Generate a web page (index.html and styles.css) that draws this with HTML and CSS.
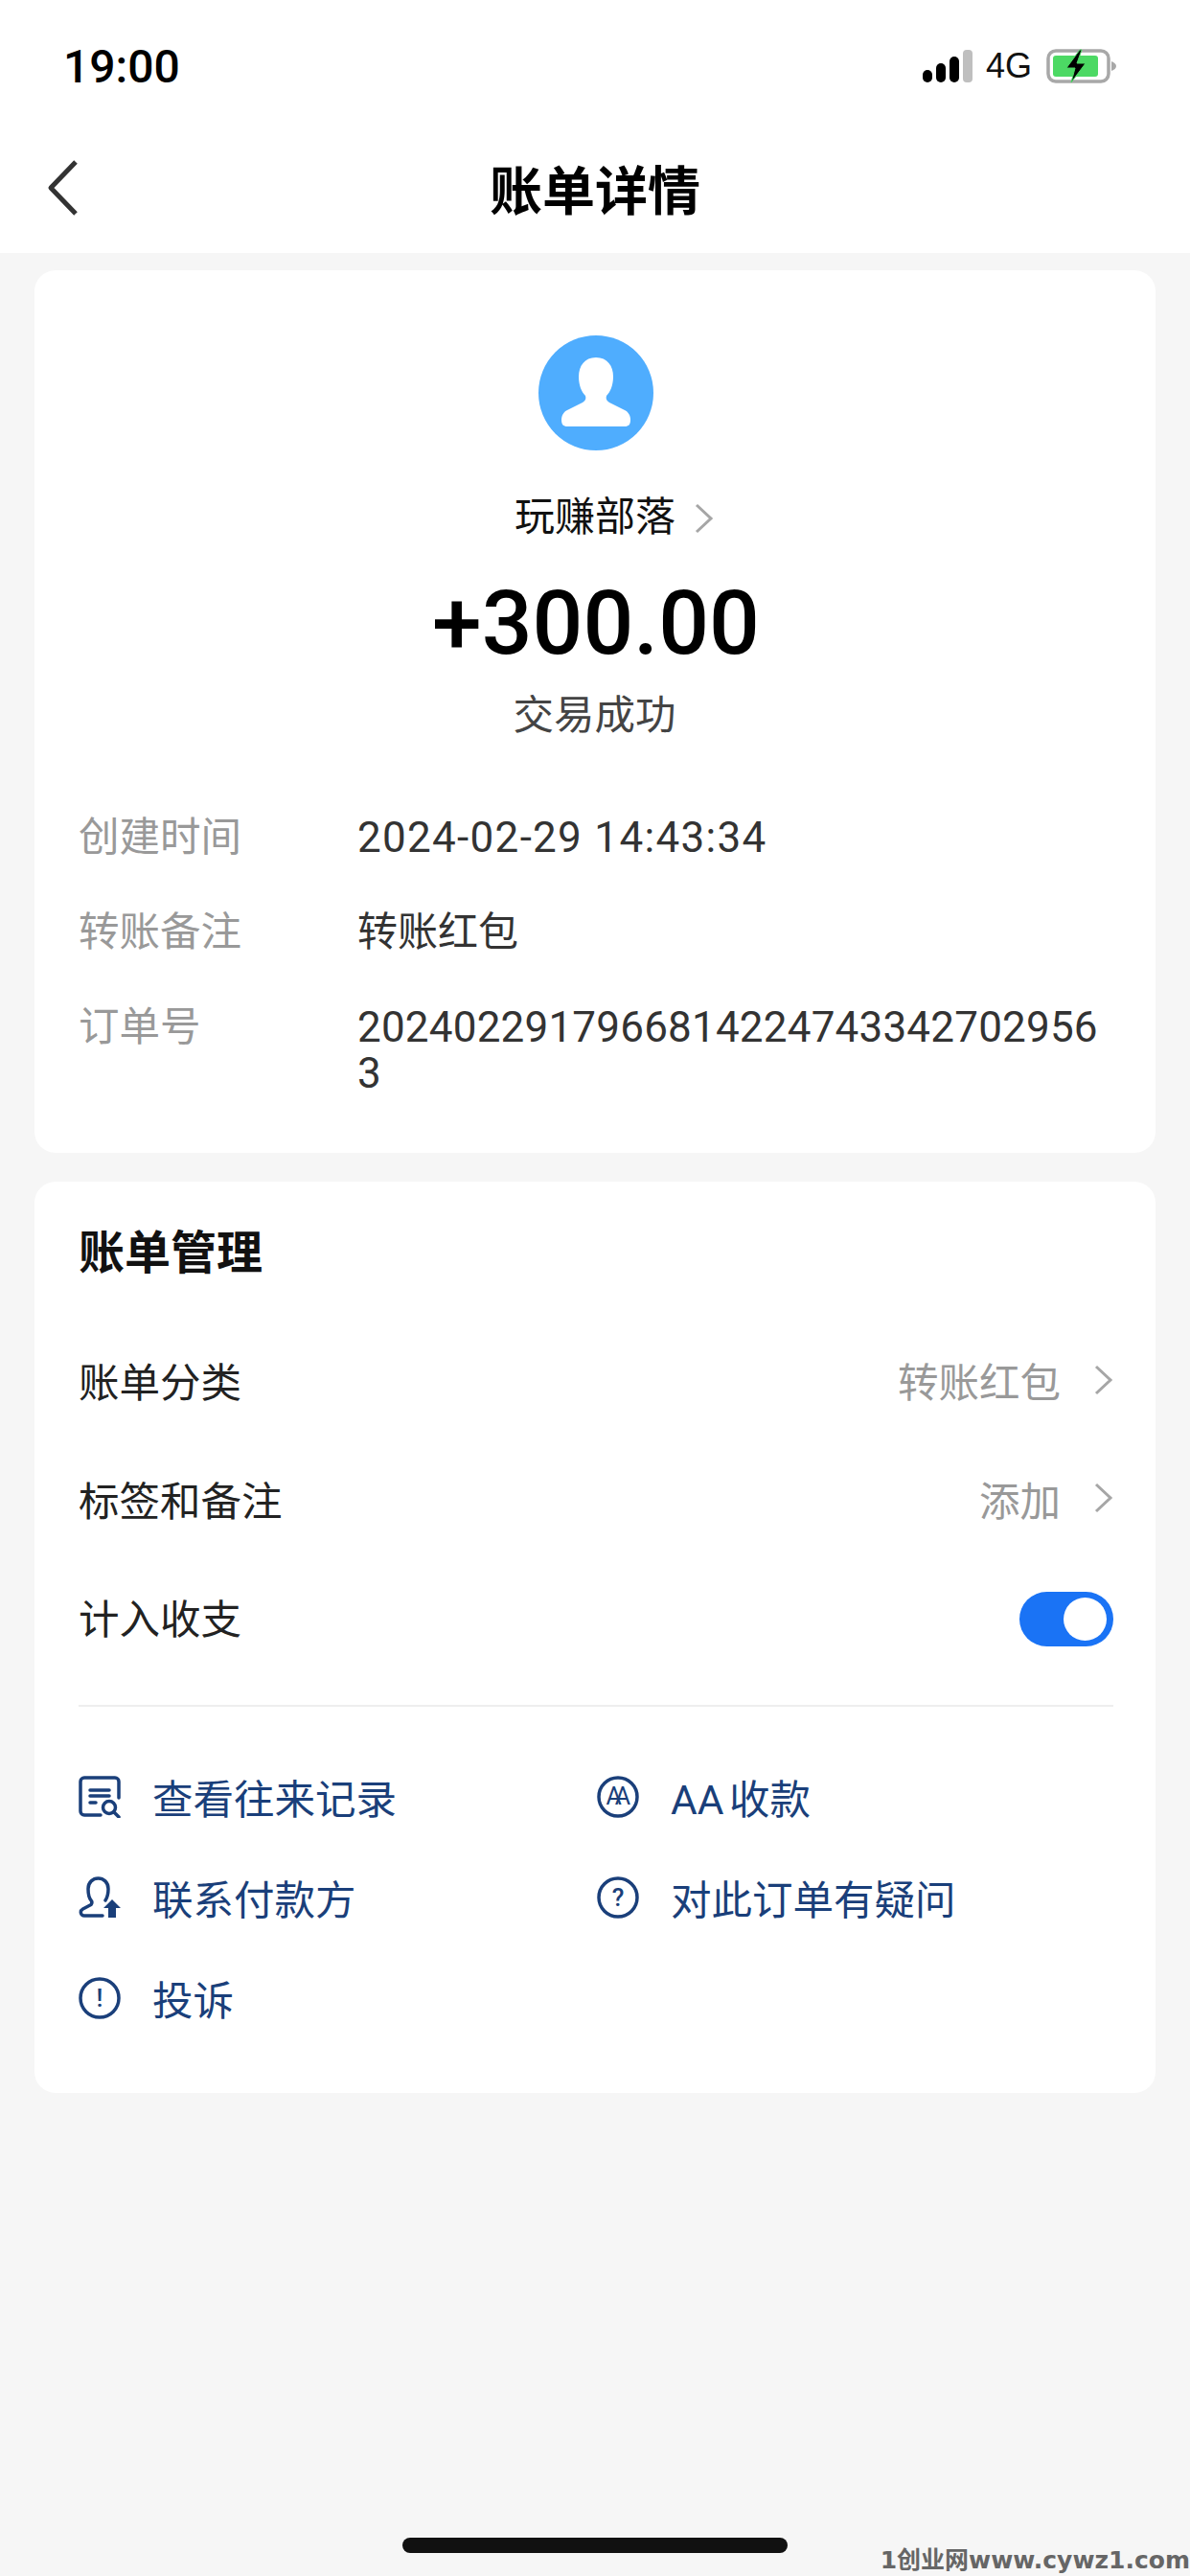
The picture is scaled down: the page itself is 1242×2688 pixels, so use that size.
FILE: index.html
```html
<!DOCTYPE html>
<html lang="zh-CN">
<head>
    <meta charset="UTF-8">
    <meta name="viewport" content="width=device-width, initial-scale=1.0">
    <title>账单详情</title>
    <link rel="stylesheet" href="styles.css">
</head>
<body>
    <div class="page">
        <div class="top">
            <div class="status">
                <span class="time">19:00</span>
                <div class="status-right">
                    <svg class="signal" width="52" height="34" viewBox="0 0 52 34">
                        <rect x="0" y="21" width="10" height="13" rx="5" fill="#000"/>
                        <rect x="14" y="14" width="10" height="20" rx="5" fill="#000"/>
                        <rect x="28" y="7" width="10" height="27" rx="5" fill="#000"/>
                        <rect x="42" y="0" width="10" height="34" rx="4" fill="#bfbfbf"/>
                    </svg>
                    <span class="net">4G</span>
                    <svg class="battery" width="74" height="36" viewBox="0 0 74 36">
                        <rect x="2" y="2" width="63" height="32" rx="8" fill="#fff" stroke="#a8a8a8" stroke-width="3.5"/>
                        <rect x="7" y="7" width="47" height="22" rx="3" fill="#4cd964"/>
                        <path d="M68 13c3 1 5 3 5 5s-2 4-5 5z" fill="#a8a8a8"/>
                        <path d="M35 1L21 20h9l-4 15 15-20h-9l5-14z" fill="#000" stroke="#4cd964" stroke-width="1"/>
                    </svg>
                </div>
            </div>
            <div class="nav">
                <svg class="back" width="32" height="58" viewBox="0 0 32 58">
                    <polyline points="30,2 4,29 30,56" fill="none" stroke="#333" stroke-width="5" stroke-linejoin="round"/>
                </svg>
                <h1>账单详情</h1>
            </div>
        </div>

        <div class="card summary">
            <div class="avatar">
                <svg width="120" height="120" viewBox="0 0 120 120">
                    <circle cx="60" cy="60" r="60" fill="#4fadfe"/>
                    <path d="M60 23C48 23 42 32 42 43C42 52 45 59 49 63C50 66 49 68 46 70L30 78C26 80 24 84 24 88C24 93 26 95 30 95H90C94 95 96 93 96 88C96 84 94 80 90 78L74 70C71 68 70 66 71 63C75 59 78 52 78 43C78 32 72 23 60 23Z" fill="#fff"/>
                </svg>
            </div>
            <div class="name">
                <span>玩赚部落</span>
                <svg class="chevron name-arrow" width="20" height="32" viewBox="0 0 20 32">
                    <polyline points="2,2 17,16 2,30"/>
                </svg>
            </div>
            <div class="amount">+300.00</div>
            <div class="result">交易成功</div>
            <div class="info">
                <div class="info-row">
                    <div class="info-label">创建时间</div>
                    <div class="info-value info-date">2024-02-29 14:43:34</div>
                </div>
                <div class="info-row">
                    <div class="info-label">转账备注</div>
                    <div class="info-value info-text">转账红包</div>
                </div>
                <div class="info-row">
                    <div class="info-label">订单号</div>
                    <div class="info-value info-order">20240229179668142247433427029563</div>
                </div>
            </div>
        </div>

        <div class="card manage">
            <h2>账单管理</h2>
            <div class="row">
                <span>账单分类</span>
                <div class="row-right">
                    <span class="row-value">转账红包</span>
                    <svg class="chevron" width="20" height="32" viewBox="0 0 20 32"><polyline points="2,2 17,16 2,30"/></svg>
                </div>
            </div>
            <div class="row">
                <span>标签和备注</span>
                <div class="row-right">
                    <span class="row-value">添加</span>
                    <svg class="chevron" width="20" height="32" viewBox="0 0 20 32"><polyline points="2,2 17,16 2,30"/></svg>
                </div>
            </div>
            <div class="row">
                <span>计入收支</span>
                <div class="toggle"><div class="knob"></div></div>
            </div>
            <div class="divider"></div>
            <div class="actions">
                <div class="action">
                    <svg class="icon" width="44" height="44" viewBox="0 0 44 44">
                        <path d="M23 41H6a4 4 0 0 1-4-4V6a4 4 0 0 1 4-4h32a4 4 0 0 1 4 4v17"/>
                        <path d="M12 15h20M12 21h20M12 28h6"/>
                        <circle cx="32" cy="33" r="6.5"/>
                        <path d="M37 38l5 5"/>
                    </svg>
                    <span>查看往来记录</span>
                </div>
                <div class="action">
                    <svg class="icon" width="44" height="44" viewBox="0 0 44 44">
                        <circle cx="22" cy="22" r="20"/>
                        <text class="icon-text aa" x="18.700" y="30">AA</text>
                    </svg>
                    <span class="action-aa">AA 收款</span>
                </div>
                <div class="action">
                    <svg class="icon" width="44" height="44" viewBox="0 0 44 44">
                        <path d="M25 41H6C2 41 1 36 4.500 34L13 29.500C14 28 14 26 13 25C11 22.500 10 19 10 13C10 6 15 2 20.500 2S31 6 31 13C31 18 30 22 28 25"/>
                        <path class="solid" d="M35 24L44 33H39V43H31V33H26Z"/>
                    </svg>
                    <span>联系付款方</span>
                </div>
                <div class="action">
                    <svg class="icon" width="44" height="44" viewBox="0 0 44 44">
                        <circle cx="22" cy="22" r="20"/>
                        <text class="icon-text" x="22" y="31">?</text>
                    </svg>
                    <span>对此订单有疑问</span>
                </div>
                <div class="action">
                    <svg class="icon" width="44" height="44" viewBox="0 0 44 44">
                        <circle cx="22" cy="22" r="20"/>
                        <text class="icon-text" x="22" y="31">!</text>
                    </svg>
                    <span>投诉</span>
                </div>
            </div>
        </div>

        <div class="home-bar"></div>
        <div class="watermark">1创业网www.cywz1.com</div>
    </div>
</body>
</html>
```

FILE: styles.css
```css
body {
    margin: 0;
    background-color: #f6f6f6;
    font-family: Roboto, "Noto Sans CJK SC", sans-serif;
    color: #111;
}
.page {
    position: relative;
    height: 2688px;
    overflow: hidden;
    display: flex;
    flex-direction: column;
}
.top {
    background-color: #fff;
    height: 264px;
}
.status {
    height: 138px;
    box-sizing: border-box;
    padding: 0 76px 0 66px;
    display: flex;
    justify-content: space-between;
    align-items: center;
}
.time {
    font-size: 48px;
    font-weight: 500;
    color: #000;
}
.status-right {
    display: flex;
    align-items: center;
}
.net {
    font-family: "Liberation Sans", sans-serif;
    font-size: 36px;
    margin: 0 15px 0 14px;
    color: #111;
}
.nav {
    height: 126px;
    display: flex;
    align-items: center;
    justify-content: center;
    position: relative;
}
.back {
    position: absolute;
    left: 49px;
    top: 29px;
}
h1 {
    margin: 0 0 3px;
    font-size: 55px;
    font-weight: 700;
    color: #000;
    line-height: 60px;
}
.card {
    background-color: #fff;
    border-radius: 22px;
    margin: 0 36px;
    box-sizing: border-box;
    padding-left: 46px;
    padding-right: 44px;
}
.summary {
    margin-top: 18px;
    padding-top: 68px;
    padding-bottom: 59px;
    display: flex;
    flex-direction: column;
    align-items: center;
}
.avatar {
    width: 120px;
    height: 120px;
}
.name {
    margin-top: 40px;
    margin-right: 2px;
    font-size: 42px;
    line-height: 60px;
    color: #111;
    position: relative;
}
.name-arrow {
    position: absolute;
    left: 188px;
    top: 15px;
}
.chevron polyline {
    fill: none;
    stroke: #a6a6a6;
    stroke-width: 3;
}
.amount {
    margin-top: 26px;
    font-size: 93px;
    font-weight: 500;
    line-height: 110px;
    color: #000;
}
.result {
    margin-top: 11px;
    margin-right: 3px;
    font-size: 42.500px;
    line-height: 60px;
    color: #444;
}
.info {
    margin-top: 73px;
    width: 100%;
    display: flex;
    flex-direction: column;
    gap: 51px;
}
.info-row {
    display: grid;
    grid-template-columns: 291px 1fr;
    font-size: 42.500px;
    line-height: 48px;
}
.info-label {
    color: #999;
}
.info-value {
    color: #333;
    word-break: break-all;
}
.info-date {
    font-size: 44px;
    letter-spacing: 1.300px;
}
.info-text {
    font-size: 42px;
}
.info-order {
    font-size: 44px;
    letter-spacing: 0.200px;
}
.manage {
    margin-top: 30px;
    padding-top: 45px;
    padding-bottom: 69px;
}
h2 {
    margin: 0 0 40px;
    font-size: 48px;
    font-weight: 700;
    line-height: 60px;
    color: #111;
}
.row {
    height: 123.500px;
    display: flex;
    align-items: center;
    justify-content: space-between;
    font-size: 42.500px;
    color: #222;
}
.row-right {
    display: flex;
    align-items: center;
    gap: 35px;
}
.row-value {
    color: #999;
}
.toggle {
    width: 98px;
    height: 57px;
    margin-top: 6px;
    border-radius: 29px;
    background-color: #1a73f5;
    display: flex;
    align-items: center;
    justify-content: flex-end;
    padding-right: 7px;
    box-sizing: border-box;
}
.knob {
    width: 45px;
    height: 45px;
    border-radius: 50%;
    background-color: #fff;
}
.divider {
    height: 2px;
    background-color: #eee;
    margin-top: 30px;
}
.actions {
    margin-top: 64px;
    display: grid;
    grid-template-columns: 541px 1fr;
    row-gap: 45px;
}
.action {
    display: flex;
    align-items: center;
    gap: 33px;
    height: 60px;
    font-size: 42.500px;
    color: #1a3f7a;
}
.action-aa {
    word-spacing: -5px;
}
.icon {
    fill: none;
    stroke: #1a3f7a;
    stroke-width: 3.500;
    stroke-linecap: round;
    stroke-linejoin: round;
}
.icon .solid {
    fill: #1a3f7a;
    stroke: none;
}
.icon-text {
    fill: #1a3f7a;
    stroke: none;
    font-family: Roboto, sans-serif;
    font-size: 26px;
    font-weight: 500;
    text-anchor: middle;
}
.icon-text.aa {
    font-size: 25px;
    font-weight: 400;
    letter-spacing: -7px;
}
.home-bar {
    position: absolute;
    left: 420px;
    top: 2648px;
    width: 402px;
    height: 16px;
    border-radius: 8px;
    background-color: #111;
}
.watermark {
    position: absolute;
    right: 0;
    top: 2657px;
    font-family: "DejaVu Sans", "Noto Sans CJK SC", sans-serif;
    font-size: 25px;
    font-weight: 700;
    line-height: 30px;
    color: #666;
    white-space: nowrap;
}
```
